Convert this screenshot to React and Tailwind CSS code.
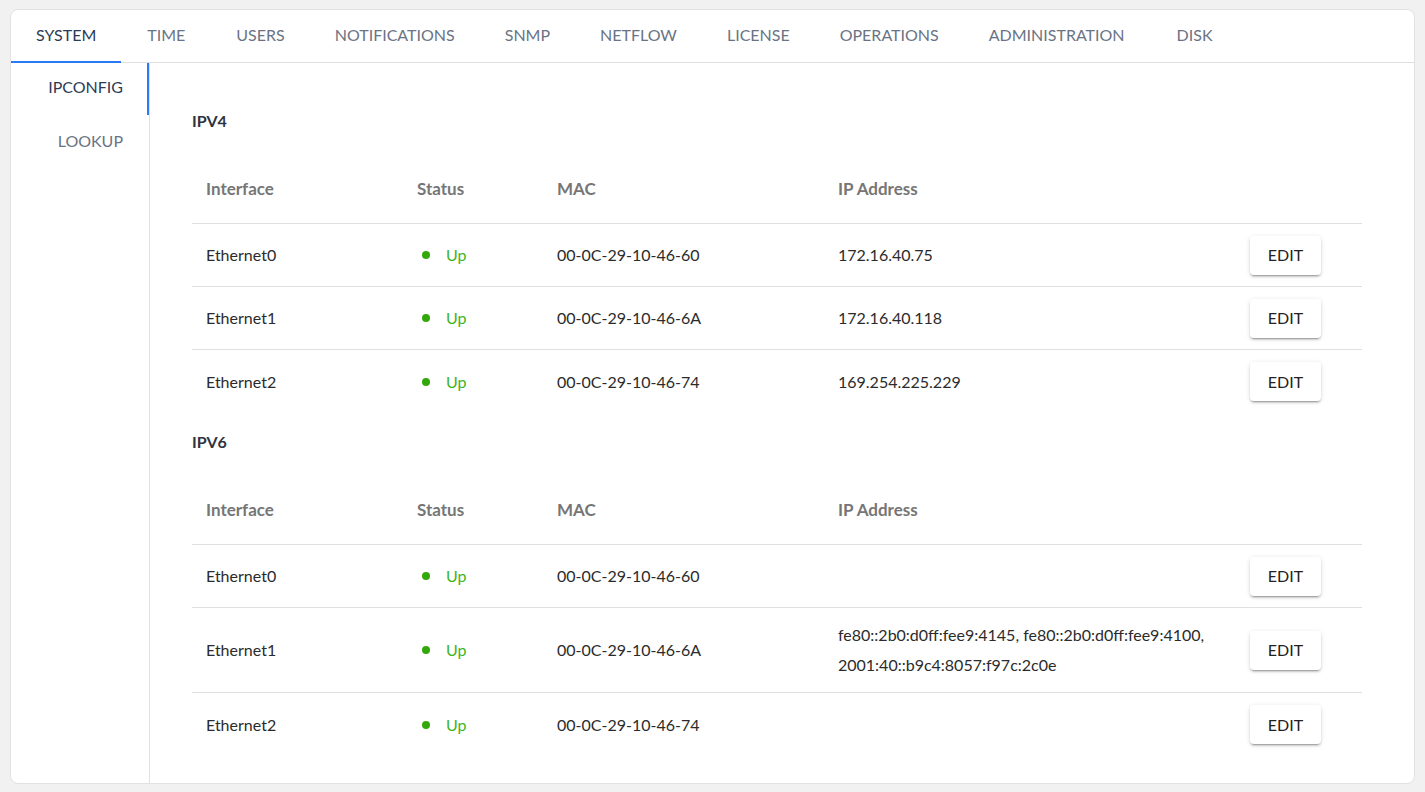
import React from "react";

const tabs = ["SYSTEM","TIME","USERS","NOTIFICATIONS","SNMP","NETFLOW","LICENSE","OPERATIONS","ADMINISTRATION","DISK"];

const ipv4 = [
  { name: "Ethernet0", mac: "00-0C-29-10-46-60", ip: ["172.16.40.75"] },
  { name: "Ethernet1", mac: "00-0C-29-10-46-6A", ip: ["172.16.40.118"] },
  { name: "Ethernet2", mac: "00-0C-29-10-46-74", ip: ["169.254.225.229"] },
];
const ipv6 = [
  { name: "Ethernet0", mac: "00-0C-29-10-46-60", ip: [] },
  { name: "Ethernet1", mac: "00-0C-29-10-46-6A", ip: ["fe80::2b0:d0ff:fee9:4145, fe80::2b0:d0ff:fee9:4100,", "2001:40::b9c4:8057:f97c:2c0e"] },
  { name: "Ethernet2", mac: "00-0C-29-10-46-74", ip: [] },
];

const cols = "grid grid-cols-[211px_140px_281px_1fr_112px]";

function Section({ title, rows }) {
  return (
    <div>
      <div className="h-[58px] flex items-center text-[16px] font-bold text-[#2f3440]">{title}</div>
      <div className={`${cols} h-[74px] items-center pt-[5px] border-b border-[#e0e0e0] text-[17px] font-bold text-[#767676]`}>
        <div className="pl-[14px]">Interface</div>
        <div className="pl-[14px]">Status</div>
        <div className="pl-[14px]">MAC</div>
        <div className="pl-[14px]">IP Address</div>
        <div></div>
      </div>
      {rows.map((r, i) => (
        <div key={i} className={`${cols} min-h-[63px] py-[11px] items-center text-[16px] text-[#2b2b2b] leading-[30px] ${i < rows.length - 1 ? "border-b border-[#e0e0e0]" : ""}`}>
          <div className="pl-[14px]">{r.name}</div>
          <div className="pl-[14px] flex items-center">
            <span className="ml-[5px] w-[8px] h-[8px] rounded-full bg-[#33a80a]"></span>
            <span className="ml-[16px] text-[#3fb41c]">Up</span>
          </div>
          <div className="pl-[14px]">{r.mac}</div>
          <div className={`pl-[14px] ${r.ip.length > 1 ? "py-[1px]" : ""}`}>
            {r.ip.map((l, j) => (<div key={j}>{l}</div>))}
          </div>
          <div className="flex justify-end pr-[41px]">
            <button className="w-[71px] h-[39px] bg-white rounded text-[16px] text-[#222] shadow-[0_3px_1px_-2px_rgba(0,0,0,0.2),0_2px_2px_0_rgba(0,0,0,0.14),0_1px_5px_0_rgba(0,0,0,0.12)]">EDIT</button>
          </div>
        </div>
      ))}
    </div>
  );
}

export default function App() {
  return (
    <div className="min-h-screen bg-[#f1f1f1] pt-[9px] px-[10px] font-['Lato',sans-serif]">
      <div className="h-[775px] w-[1405px] bg-white border border-[#e2e2e2] rounded-lg overflow-hidden flex flex-col">
        <div className="flex h-[53px] border-b border-[#e0e0e0] shrink-0">
          {tabs.map((t, i) => (
            <div key={t} className={`relative min-w-[90px] px-[25px] pb-[2px] flex items-center justify-center text-[16px] ${i === 0 ? "text-[#2c3b55]" : "text-[#6a7384]"}`}>
              {t}
              {i === 0 && <span className="absolute left-0 right-0 bottom-[-1px] h-[2px] bg-[#2a7af5]"></span>}
            </div>
          ))}
        </div>
        <div className="flex flex-1">
          <div className="w-[139px] border-r border-[#e0e0e0] shrink-0">
            <div className="relative h-[52px] pb-[4px] flex items-center justify-end pr-[26px] text-[16px] text-[#2c3b55]">
              IPCONFIG
              <span className="absolute right-0 top-0 bottom-0 w-[2px] bg-[#2a7af5]"></span>
            </div>
            <div className="h-[56px] pb-[4px] flex items-center justify-end pr-[26px] text-[16px] text-[#6a7384]">LOOKUP</div>
          </div>
          <div className="flex-1 pl-[42px] pr-[52px] pt-[29px]">
            <Section title="IPV4" rows={ipv4} />
            <Section title="IPV6" rows={ipv6} />
          </div>
        </div>
      </div>
    </div>
  );
}
